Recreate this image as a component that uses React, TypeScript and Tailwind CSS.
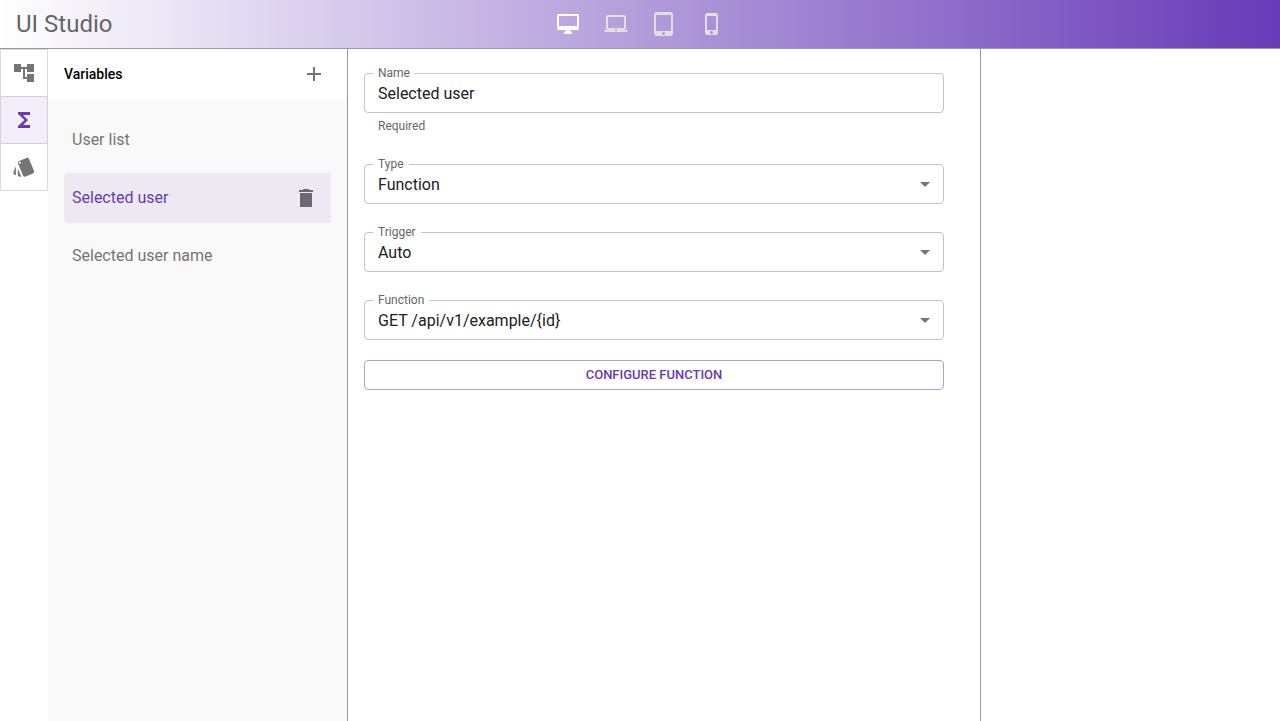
import { useState } from "react";
import type { ReactNode } from "react";
import { MdAccountTree, MdAdd, MdArrowDropDown, MdFunctions, MdStyle } from "react-icons/md";

const devices = [
  {
    name: "Desktop",
    path: "M21 2H3c-1.1 0-2 .9-2 2v12c0 1.1.9 2 2 2h7l-2 3v1h8v-1l-2-3h7c1.1 0 2-.9 2-2V4c0-1.1-.9-2-2-2zm0 12H3V4h18v10z",
  },
  {
    name: "Laptop",
    path: "M20 18c1.1 0 1.99-.9 1.99-2L22 5c0-1.1-.9-2-2-2H4c-1.1 0-2 .9-2 2v11c0 1.1.9 2 2 2H0c0 1.1.9 2 2 2h20c1.1 0 2-.9 2-2h-4zM4 5h16v11H4V5zm8 14c-.55 0-1-.45-1-1s.45-1 1-1 1 .45 1 1-.45 1-1 1z",
  },
  {
    name: "Tablet",
    path: "M18.5 0h-14C3.12 0 2 1.12 2 2.5v19C2 22.88 3.12 24 4.5 24h14c1.38 0 2.5-1.12 2.5-2.5v-19C21 1.12 19.88 0 18.5 0zm-7 23c-.83 0-1.5-.67-1.5-1.5s.67-1.5 1.5-1.5 1.5.67 1.5 1.5-.67 1.5-1.5 1.5zm7.5-4H4V3h15v16z",
  },
  {
    name: "Phone",
    path: "M15.5 1h-8C6.12 1 5 2.12 5 3.5v17C5 21.88 6.12 23 7.5 23h8c1.38 0 2.5-1.12 2.5-2.5v-17C18 2.12 16.88 1 15.5 1zm-4 21c-.83 0-1.5-.67-1.5-1.5s.67-1.5 1.5-1.5 1.5.67 1.5 1.5-.67 1.5-1.5 1.5zm4.5-4H7V4h9v14z",
  },
];

const deletePath = "M6 21h12V7H6v14zM19 4h-3.5l-1-1h-5l-1 1H5v2h14V4z";

const tools = [
  { name: "Components", Icon: MdAccountTree },
  { name: "Variables", Icon: MdFunctions },
  { name: "Theme", Icon: MdStyle },
];

const variables = ["User list", "Selected user", "Selected user name"];

function Glyph({ path }: { path: string }) {
  return (
    <svg viewBox="0 0 24 24" fill="currentColor" aria-hidden="true" className="size-6">
      <path d={path} />
    </svg>
  );
}

function Field({ id, label, children }: { id: string; label: string; children: ReactNode }) {
  return (
    <div className="relative">
      {children}
      <label
        htmlFor={id}
        className="absolute -top-2 left-[9px] bg-white px-[5px] text-xs leading-4 text-[#666666]"
      >
        {label}
      </label>
    </div>
  );
}

function SelectField({ id, label, options }: { id: string; label: string; options: string[] }) {
  return (
    <Field id={id} label={label}>
      <select
        id={id}
        className="block h-10 w-full appearance-none rounded border border-[#c4c4c4] bg-white px-[13px] pt-0.5 text-base text-[#212121]"
      >
        {options.map((option) => (
          <option key={option}>{option}</option>
        ))}
      </select>
      <MdArrowDropDown
        aria-hidden
        className="pointer-events-none absolute top-2 right-[7px] size-6 text-[#757575]"
      />
    </Field>
  );
}

export default function App() {
  const [device, setDevice] = useState("Desktop");
  const [tool, setTool] = useState("Variables");
  const [selected, setSelected] = useState("Selected user");

  return (
    <div className="flex min-h-screen flex-col bg-white font-['Roboto',sans-serif] text-[#212121]">
      <header className="grid h-[49px] grid-cols-[1fr_auto_1fr] items-center border-b border-[#999999] bg-linear-to-r/srgb from-white to-[#673ab7]">
        <h1 className="pl-4 text-2xl text-[#666666]">UI Studio</h1>
        <div className="flex">
          {devices.map(({ name, path }) => (
            <button
              key={name}
              type="button"
              aria-label={name}
              aria-pressed={device === name}
              onClick={() => setDevice(name)}
              className={`grid size-12 place-items-center ${device === name ? "text-white" : "text-[#e0e0e0]"}`}
            >
              <Glyph path={path} />
            </button>
          ))}
        </div>
      </header>

      <div className="flex grow">
        <nav className="flex w-12 shrink-0 flex-col">
          {tools.map(({ name, Icon }) => (
            <button
              key={name}
              type="button"
              aria-label={name}
              aria-pressed={tool === name}
              onClick={() => setTool(name)}
              className={`-mb-px grid size-12 place-items-center border ${
                tool === name
                  ? "z-10 border-[#d4d0dd] bg-[#f3effa] text-[#673ab7]"
                  : "border-[#dcdcdc] text-[#757575]"
              }`}
            >
              <Icon className="size-6" />
            </button>
          ))}
        </nav>

        <aside className="w-[300px] shrink-0 border-r border-[#999999] bg-[#f9f9f9]">
          <div className="flex h-[50px] items-center justify-between bg-white px-4">
            <h2 className="text-sm font-medium text-black">Variables</h2>
            <button type="button" aria-label="Add variable" className="px-[5px] text-[#757575]">
              <MdAdd className="size-6" />
            </button>
          </div>
          <ul className="flex flex-col gap-2 p-4">
            {variables.map((name) => (
              <li
                key={name}
                className={`flex h-[50px] items-center rounded-[3px] ${
                  selected === name ? "bg-[#ede9f3] text-[#673ab7]" : "text-[#757575]"
                }`}
              >
                <button
                  type="button"
                  onClick={() => setSelected(name)}
                  className="h-full grow px-2 text-left text-base"
                >
                  {name}
                </button>
                {selected === name && (
                  <button type="button" aria-label={`Delete ${name}`} className="px-[13px] text-[#6b6970]">
                    <Glyph path={deletePath} />
                  </button>
                )}
              </li>
            ))}
          </ul>
        </aside>

        <main className="grow pt-6 pr-9 pl-4">
          <form className="flex flex-col" onSubmit={(event) => event.preventDefault()}>
            <Field id="name" label="Name">
              <input
                id="name"
                defaultValue="Selected user"
                aria-describedby="name-hint"
                className="block h-10 w-full rounded border border-[#c4c4c4] bg-white px-[13px] text-base text-[#212121]"
              />
            </Field>
            <p id="name-hint" className="mt-[3px] px-[14px] text-xs leading-5 text-[#666666]">
              Required
            </p>
            <div className="mt-7 flex flex-col gap-7">
              <SelectField id="type" label="Type" options={["Function"]} />
              <SelectField id="trigger" label="Trigger" options={["Auto", "Manual"]} />
              <SelectField id="function" label="Function" options={["GET /api/v1/example/{id}"]} />
            </div>
            <button
              type="button"
              className="mt-5 h-[30px] rounded border border-[#b39ddb] text-[13px] font-medium text-[#673ab7] uppercase"
            >
              Configure function
            </button>
          </form>
        </main>

        <section aria-label="Preview" className="w-[300px] shrink-0 border-l border-[#999999]" />
      </div>
    </div>
  );
}
